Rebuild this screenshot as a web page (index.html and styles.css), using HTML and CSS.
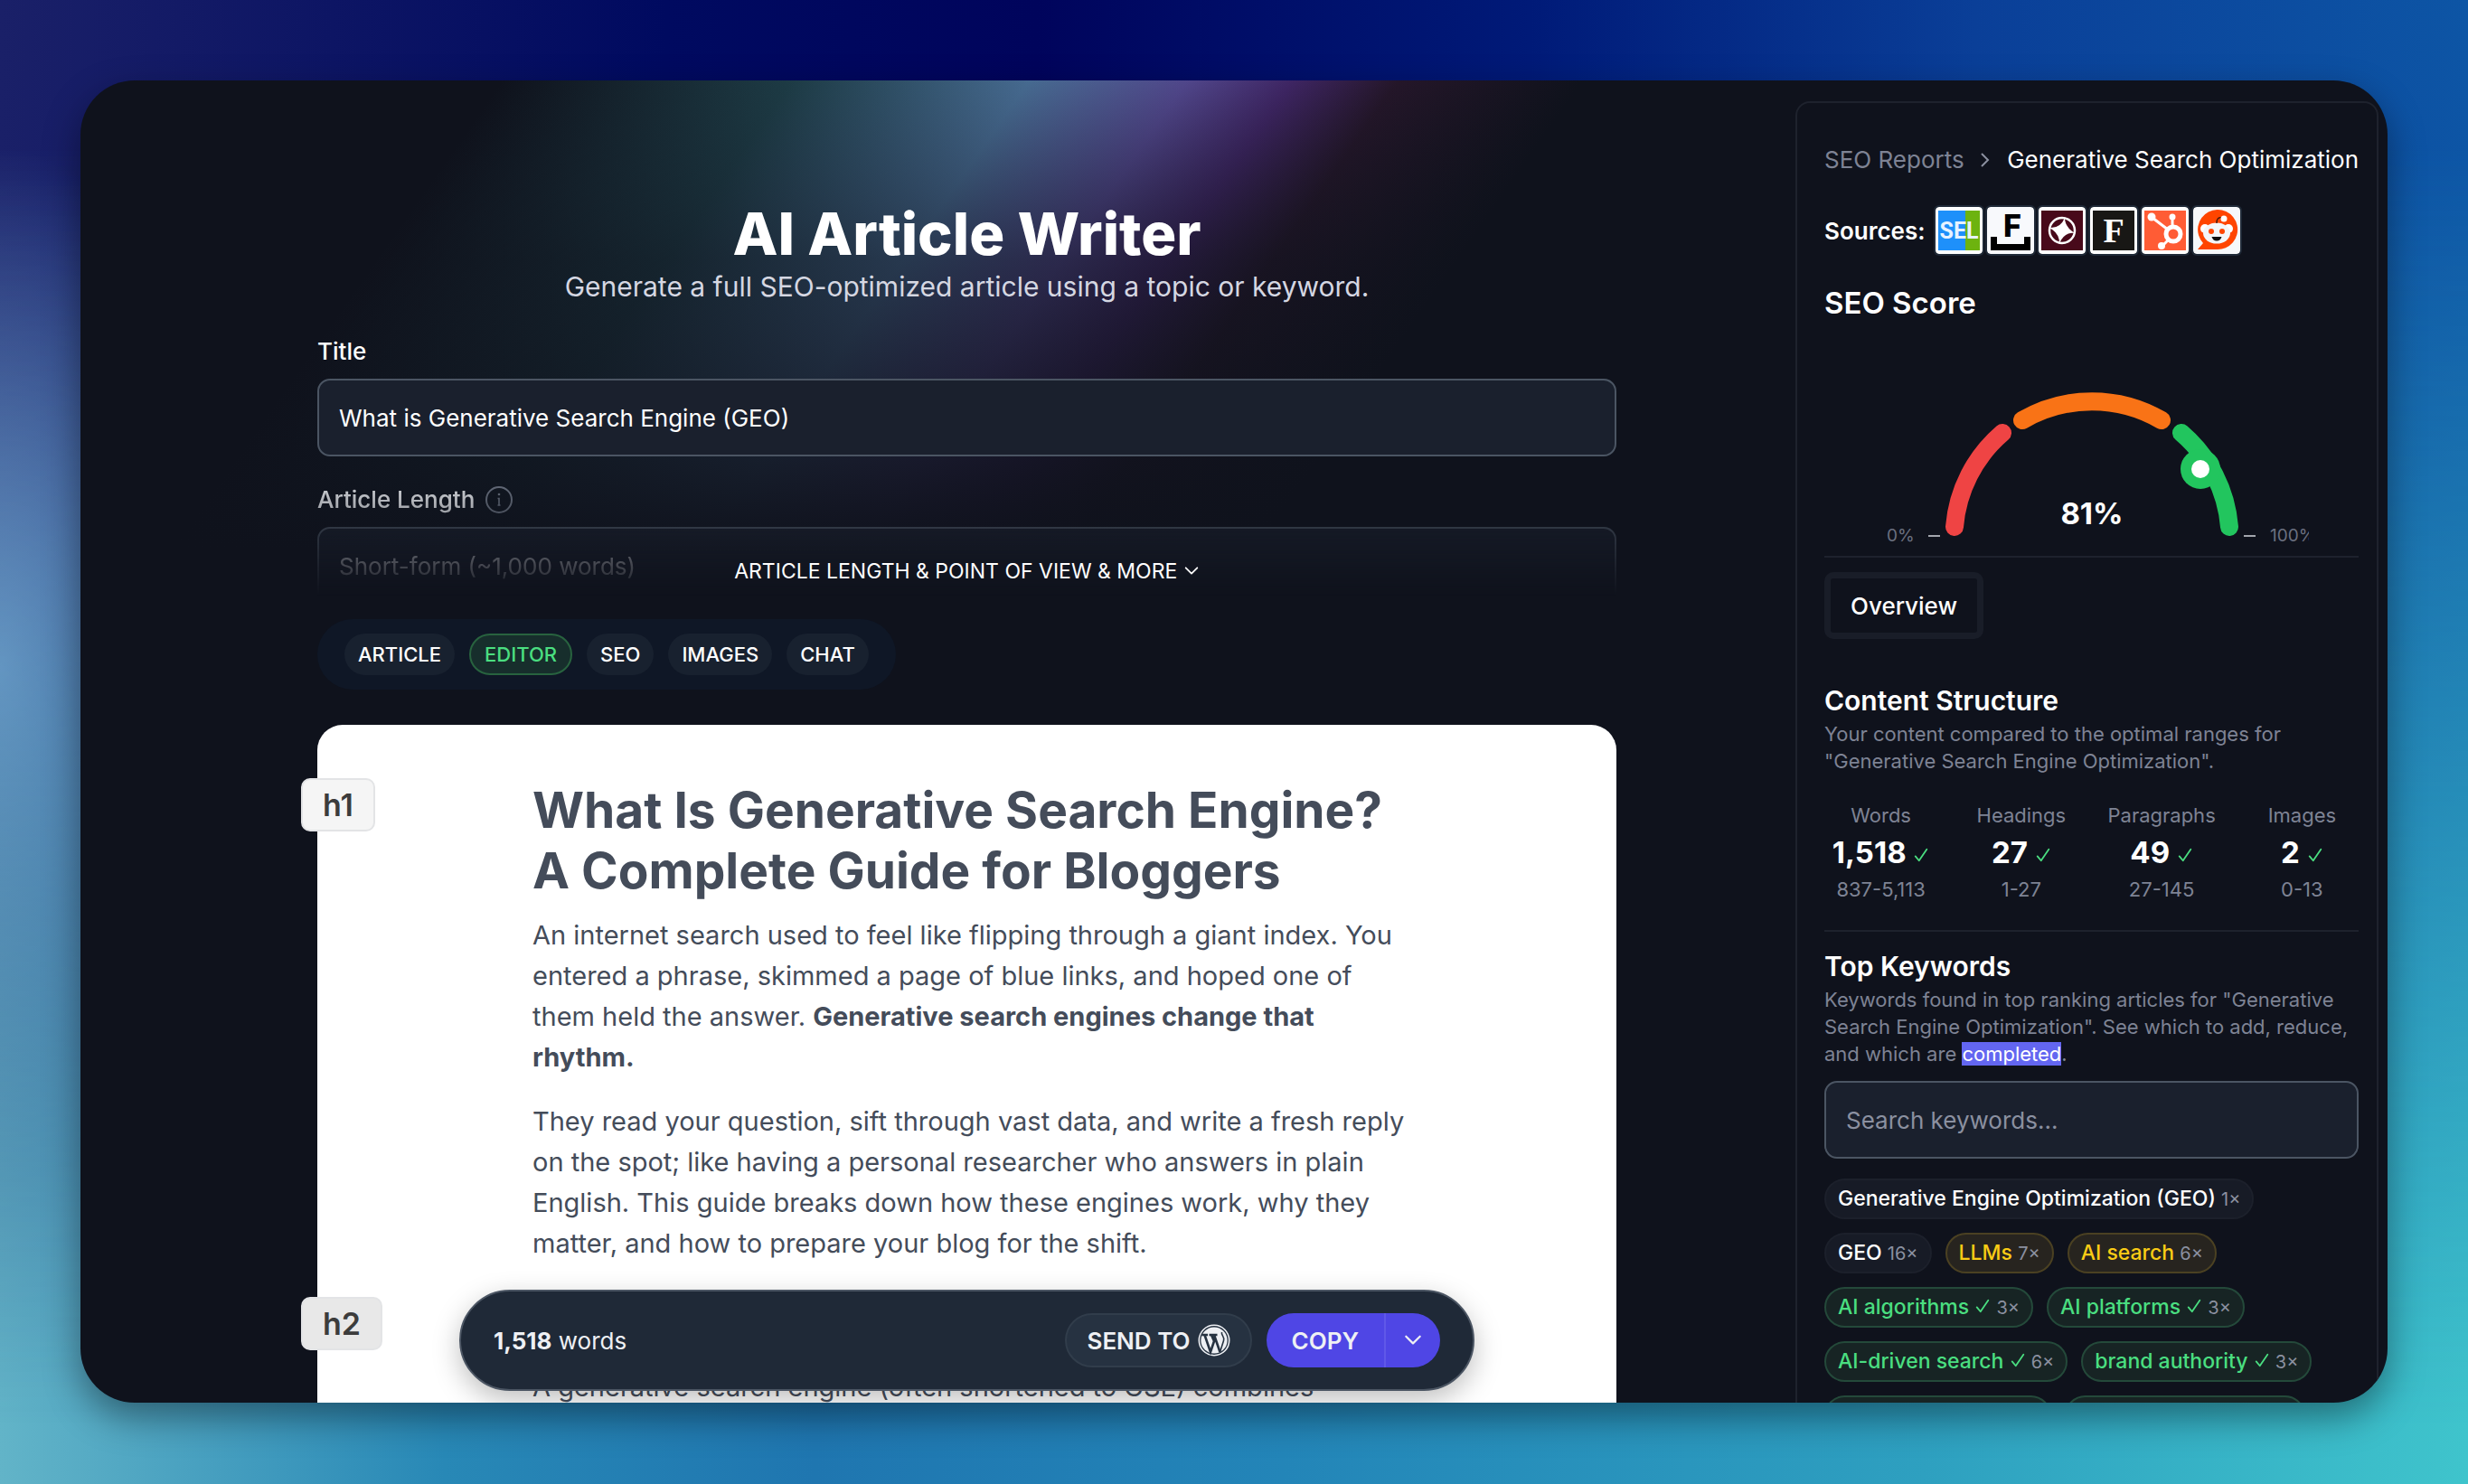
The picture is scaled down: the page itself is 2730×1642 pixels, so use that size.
FILE: index.html
```html
<!DOCTYPE html>
<html lang="en">
<head>
    <meta charset="UTF-8">
    <meta name="viewport" content="width=device-width, initial-scale=1.0">
    <title>AI Article Writer</title>
    <link rel="stylesheet" href="styles.css">
</head>
<body>
    <svg class="sprite" aria-hidden="true">
        <symbol id="check" viewBox="0 0 20 20"><path d="M3 11.5 7.5 17 17 3" fill="none" stroke="currentColor" stroke-width="2" stroke-linecap="round" stroke-linejoin="round"/></symbol>
        <symbol id="chevron" viewBox="0 0 20 20"><path d="M3 7l7 7 7-7" fill="none" stroke="currentColor" stroke-width="2" stroke-linecap="round" stroke-linejoin="round"/></symbol>
    </svg>

    <div class="window">
        <main class="writer">
            <header class="intro">
                <h1>AI Article Writer</h1>
                <p>Generate a full SEO-optimized article using a topic or keyword.</p>
            </header>

            <label class="label" for="title">Title</label>
            <input class="field" type="text" id="title" value="What is Generative Search Engine (GEO)">

            <div class="more">
                <div class="more-fields">
                    <label class="label" for="length">Article Length
                        <svg class="info" viewBox="0 0 30 30"><circle cx="15" cy="15" r="14" fill="none" stroke="currentColor" stroke-width="2"/><circle cx="15" cy="9" r="1.3" fill="currentColor"/><path d="M13.5 13.5H15V21M13.5 21h3" fill="none" stroke="currentColor" stroke-width="1.6"/></svg>
                    </label>
                    <select class="field" id="length">
                        <option>Short-form (~1,000 words)</option>
                    </select>
                </div>
                <button class="more-toggle" type="button">ARTICLE LENGTH &amp; POINT OF VIEW &amp; MORE <svg class="icon-18"><use href="#chevron"/></svg></button>
            </div>

            <nav class="tabs">
                <button type="button">ARTICLE</button>
                <button type="button" class="active">EDITOR</button>
                <button type="button">SEO</button>
                <button type="button">IMAGES</button>
                <button type="button">CHAT</button>
            </nav>

            <article class="editor">
                <span class="tag tag-h1">h1</span>
                <span class="tag tag-h2">h2</span>
                <h2>What Is Generative Search Engine? A Complete Guide for Bloggers</h2>
                <p>An internet search used to feel like flipping through a giant index. You entered a phrase, skimmed a page of blue links, and hoped one of them held the answer. <strong>Generative search engines change that rhythm.</strong></p>
                <p>They read your question, sift through vast data, and write a fresh reply on the spot; like having a personal researcher who answers in plain English. This guide breaks down how these engines work, why they matter, and how to prepare your blog for the shift.</p>
                <p class="next">A generative search engine (often shortened to GSE) combines</p>
            </article>

            <div class="bar">
                <p><b>1,518</b> words</p>
                <button type="button" class="send">SEND TO
                    <svg class="wp" viewBox="0 0 36 36"><circle cx="18" cy="18" r="16.7" fill="none" stroke="#eef0f4" stroke-width="1.6"/><circle cx="18" cy="18" r="14.6" fill="#eef0f4"/><path d="M4.5 12h6.5M12.5 12h9M7.5 12l6.5 19 4-12-3-7M18 12l6.5 19" fill="none" stroke="#263241" stroke-width="2.6"/><path d="M24.5 31l4-12.500c1.500-5-3-6-2-9.500" fill="none" stroke="#263241" stroke-width="1.6"/></svg>
                </button>
                <div class="copy">
                    <button type="button">COPY</button>
                    <button type="button" class="copy-more" aria-label="More copy options"><svg class="icon-22"><use href="#chevron"/></svg></button>
                </div>
            </div>
        </main>

        <aside class="report">
            <nav class="crumbs">
                <a href="#">SEO Reports</a>
                <svg viewBox="0 0 10 18"><path d="M1 2l7 7-7 7" fill="none" stroke="currentColor" stroke-width="2"/></svg>
                <span>Generative Search Optimization</span>
            </nav>

            <div class="sources">
                <b>Sources:</b>
                <svg viewBox="0 0 52 52"><rect width="52" height="52" rx="4" fill="#fff"/><path d="M3 4h30v44H3z" fill="#1e90fa"/><path d="M33 4h16v44H33z" fill="#6db30f"/><text x="26" y="35" class="sel">SEL</text></svg>
                <svg viewBox="0 0 52 52"><rect width="52" height="52" rx="4" fill="#f8f9fc"/><text x="28" y="33" class="block">F</text><path d="M4 33h7v8h30v-8h7v15H4z" fill="#000"/></svg>
                <svg viewBox="0 0 52 52"><rect width="52" height="52" rx="4" fill="#fff"/><path d="M3 4h46v44H3z" fill="#48091a"/><circle cx="26" cy="26" r="14" fill="none" stroke="#fff" stroke-width="2.500"/><path d="M29 12q0 10 11 17-11-2-17 11 0-11-11-17 12 1 17-11z" fill="#fff"/></svg>
                <svg viewBox="0 0 52 52"><rect width="52" height="52" rx="4" fill="#fff"/><path d="M3 4h46v44H3z" fill="#181715"/><text x="26" y="39" class="forbes">F</text></svg>
                <svg viewBox="0 0 52 52"><rect width="52" height="52" rx="4" fill="#fff"/><path d="M3 4h46v44H3z" fill="#ff5c35"/><circle cx="35" cy="30" r="8" fill="none" stroke="#fff" stroke-width="5"/><path d="M34 22V11M29 25L12 12M30 36l-8 8" stroke="#fff" stroke-width="3"/><circle cx="34" cy="11" r="3.500" fill="#fff"/><circle cx="11" cy="11" r="4.500" fill="#fff"/><circle cx="22" cy="43" r="4" fill="#fff"/></svg>
                <svg viewBox="0 0 52 52"><rect width="52" height="52" rx="4" fill="#f6f8fb"/><path d="M5 47l6-7A22 22 0 1 1 26 47z" fill="#ff4500"/><circle cx="13" cy="24" r="5" fill="#fff"/><circle cx="39" cy="24" r="5" fill="#fff"/><ellipse cx="26" cy="29" rx="15" ry="11.500" fill="#f3f6f9"/><path d="M26 18c0-5 2-7 6-6" fill="none" stroke="#4a1a0d" stroke-width="1.500"/><circle cx="34" cy="13" r="3.500" fill="#fff"/><circle cx="20" cy="27" r="3" fill="#ff4500"/><circle cx="32" cy="27" r="3" fill="#ff4500"/><path d="M20.500 33h11q-1.500 4.500-5.500 4.500T20.500 33z" fill="#111"/></svg>
            </div>

            <h3 class="score-title">SEO Score</h3>
            <svg class="gauge" viewBox="0 0 480 230">
                <g fill="none" stroke-width="20" stroke-linecap="round">
                    <path d="M88 198A153 153 0 0 1 141 94" stroke="#ef4444"/>
                    <path d="M163 80A153 153 0 0 1 317 80" stroke="#f97316"/>
                    <path d="M339 94A153 153 0 0 1 392 198" stroke="#22c55e"/>
                </g>
                <circle cx="360" cy="134" r="22" fill="#22c55e"/>
                <circle cx="360" cy="134" r="10" fill="#fff"/>
                <path d="M59 208h13M408 208h13" stroke="#a3a6ad" stroke-width="2"/>
                <text x="240" y="195" class="score">81%</text>
                <text x="13" y="214" class="tick">0%</text>
                <text x="437" y="214" class="tick">100%</text>
            </svg>

            <hr>
            <button type="button" class="overview">Overview</button>

            <h3>Content Structure</h3>
            <p class="hint">Your content compared to the optimal ranges for "Generative Search Engine Optimization".</p>
            <dl class="stats">
                <div><dt>Words</dt><dd class="value">1,518 <svg class="icon-18"><use href="#check"/></svg></dd><dd>837-5,113</dd></div>
                <div><dt>Headings</dt><dd class="value">27 <svg class="icon-18"><use href="#check"/></svg></dd><dd>1-27</dd></div>
                <div><dt>Paragraphs</dt><dd class="value">49 <svg class="icon-18"><use href="#check"/></svg></dd><dd>27-145</dd></div>
                <div><dt>Images</dt><dd class="value">2 <svg class="icon-18"><use href="#check"/></svg></dd><dd>0-13</dd></div>
            </dl>

            <hr>
            <h3>Top Keywords</h3>
            <p class="hint">Keywords found in top ranking articles for "Generative Search Engine Optimization". See which to add, reduce, and which are <mark>completed</mark>.</p>
            <input class="field" type="text" aria-label="Search keywords" placeholder="Search keywords...">

            <ul class="chips">
                <li>Generative Engine Optimization (GEO) <small>1×</small></li>
                <li>GEO <small>16×</small></li>
                <li class="low">LLMs <small>7×</small></li>
                <li class="low">AI search <small>6×</small></li>
                <li class="done">AI algorithms <svg class="icon-18"><use href="#check"/></svg> <small>3×</small></li>
                <li class="done">AI platforms <svg class="icon-18"><use href="#check"/></svg> <small>3×</small></li>
                <li class="done">AI-driven search <svg class="icon-18"><use href="#check"/></svg> <small>6×</small></li>
                <li class="done">brand authority <svg class="icon-18"><use href="#check"/></svg> <small>3×</small></li>
                <li class="done">content quality <svg class="icon-18"><use href="#check"/></svg> <small>4×</small></li>
                <li class="done">content strategy <svg class="icon-18"><use href="#check"/></svg> <small>3×</small></li>
            </ul>
        </aside>
    </div>
</body>
</html>
```
FILE: styles.css
```css
* {
    box-sizing: border-box;
    margin: 0;
    padding: 0;
}
body {
    position: relative;
    height: 100vh;
    padding: 89px 89px 90px;
    font-family: Inter, "Liberation Sans", sans-serif;
    font-size: 26px;
    color: #fff;
    background: linear-gradient(90deg, #62b4c8 0%, #2888b6 18%, #1f76b0 33%, #2385b8 52%, #2ea0c0 78%, #3fc4cc 100%);
}
/* dark half of the backdrop, fades out towards the bottom */
body::before {
    content: "";
    position: absolute;
    inset: 0;
    background:
        radial-gradient(ellipse 10% 35% at 0% 45%, #6480bc, transparent),
        linear-gradient(90deg, #1a2068 0%, #000a60 27%, #00045c 42%, #001a78 62%, #0a3f98 80%, #0d55a5 100%);
    mask-image: linear-gradient(#000 10%, transparent 96%);
}
button, input, select {
    font: inherit;
    color: inherit;
}
button {
    border: 0;
    background: none;
}
.sprite {
    position: absolute;
    width: 0;
    height: 0;
}
.icon-18 {
    width: 18px;
    height: 18px;
}
.icon-22 {
    width: 22px;
    height: 22px;
}
.window {
    position: relative;
    display: flex;
    gap: 198px;
    height: 100%;
    padding: 0 10px 0 262px;
    overflow: hidden;
    border-radius: 60px;
    background:
        linear-gradient(#0f121c00, #0f121c90 38%, #0f121c) 0 0 / 100% 520px no-repeat,
        linear-gradient(125deg, #0f121c 16%, #1d3b45 27%, #466a90 36%, #50468a 42%, #3e2563 46%, #241629 50%, #0f121c 57%) 0 0 / 100% 520px no-repeat,
        #0f121c;
    box-shadow: 0 16px 40px rgba(0, 0, 0, 0.4);
}

/* writer column */
.writer {
    position: relative;
    flex: 1;
    padding-top: 130px;
}
.intro {
    margin-bottom: 36px;
    text-align: center;
}
.intro h1 {
    font-size: 65px;
    font-weight: 800;
    line-height: 80px;
}
.intro p {
    font-size: 30px;
    line-height: 36px;
    color: #d5d7e2;
}
.label {
    display: flex;
    align-items: center;
    gap: 12px;
    margin-bottom: 12px;
    line-height: 36px;
    font-weight: 500;
}
.field {
    display: block;
    width: 100%;
    height: 86px;
    padding: 0 22px;
    border: 2px solid #4b5563;
    border-radius: 14px;
    background: #1a202d;
    appearance: none;
}
.field::placeholder {
    color: #8b90a0;
}
.more {
    position: relative;
    height: 144px;
    margin-top: 30px;
    overflow: hidden;
}
.more-fields {
    color: #e5e7eb;
    mask-image: linear-gradient(rgba(0, 0, 0, 0.9), transparent 124px);
}
.info {
    width: 30px;
    height: 30px;
    color: #6b7280;
}
.more-toggle {
    position: absolute;
    left: 0;
    right: 0;
    top: 80px;
    font-size: 23px;
    line-height: 34px;
}
.tabs {
    display: inline-flex;
    gap: 16px;
    margin: 6px 0 39px;
    padding: 16px 30px;
    border-radius: 40px;
    background: #0f1726;
}
.tabs button {
    height: 46px;
    padding: 0 15px;
    border-radius: 23px;
    background: #18212f;
    font-size: 22px;
    font-weight: 500;
}
.tabs .active {
    border: 2px solid #28633f;
    background: #172e2c;
    color: #4ade80;
}

/* document */
.editor {
    position: relative;
    height: 900px;
    padding: 61px 226px 0 238px;
    border-radius: 28px;
    background: #fff;
    color: #444c5a;
    font-size: 29px;
    line-height: 45px;
}
.editor h2 {
    margin-bottom: 15px;
    font-size: 55px;
    line-height: 67px;
}
.editor p {
    margin-bottom: 26px;
}
.editor .next {
    padding-top: 88px;
}
.tag {
    position: absolute;
    left: -18px;
    padding: 0 22px;
    border: 2px solid #e3e4e6;
    border-radius: 10px;
    background: #f5f5f5;
    color: #3c3c3c;
    font-size: 34px;
    font-weight: 600;
    line-height: 55px;
}
.tag-h1 {
    top: 59px;
}
.tag-h2 {
    top: 633px;
    background: #e8e8e8;
}
.bar {
    position: absolute;
    left: 157px;
    right: 157px;
    bottom: 13px;
    display: flex;
    align-items: center;
    gap: 16px;
    height: 112px;
    padding: 0 36px;
    border: 2px solid #4b5563;
    border-radius: 56px;
    background: #1f2937;
    box-shadow: 0 10px 30px rgba(0, 0, 0, 0.25);
    color: #eef0f4;
}
.bar p {
    flex: 1;
}
.bar button {
    font-weight: 600;
}
.send {
    display: flex;
    align-items: center;
    gap: 8px;
    height: 60px;
    padding: 0 22px;
    border: 2px solid #313d4b;
    border-radius: 30px;
    background: #263241;
}
.wp {
    width: 36px;
    height: 36px;
}
.copy {
    display: flex;
    height: 60px;
    overflow: hidden;
    border-radius: 30px;
    background: #4f46e5;
}
.copy button {
    padding: 0 28px;
}
.copy .copy-more {
    padding: 0 19px;
    border-left: 2px solid #6058e8;
}

/* report panel */
.report {
    width: 645px;
    height: 1600px;
    margin-top: 23px;
    padding: 43px 20px 0 30px;
    border: 2px solid #1e222d;
    border-radius: 16px;
}
.crumbs {
    display: flex;
    align-items: center;
    justify-content: space-between;
    line-height: 40px;
    white-space: nowrap;
}
.crumbs a {
    color: #7e8394;
    text-decoration: none;
}
.crumbs svg {
    width: 10px;
    height: 18px;
    color: #8b90a0;
}
.sources {
    display: flex;
    align-items: center;
    gap: 5px;
    margin: 32px 0 34px;
}
.sources b {
    margin-right: 6px;
    font-weight: 600;
}
.sources svg {
    width: 52px;
    height: 52px;
    border-radius: 4px;
    box-shadow: 0 0 0 2px #1f2937;
}
.sel {
    font: 700 25px Roboto, sans-serif;
    fill: #e6f2ff;
    text-anchor: middle;
}
.block {
    font: 800 34px Inter, sans-serif;
    text-anchor: middle;
}
.forbes {
    font: 700 38px "Liberation Serif", serif;
    fill: #fff;
    text-anchor: middle;
}
.report h3 {
    font-size: 30px;
    font-weight: 600;
    line-height: 40px;
}
.report .score-title {
    font-size: 33px;
}
.gauge {
    display: block;
    width: 480px;
    height: 230px;
    margin: 30px auto 0;
    overflow: hidden;
}
.score {
    font-size: 33px;
    font-weight: 700;
    fill: #fff;
    text-anchor: middle;
}
.tick {
    font-size: 19px;
    fill: #6b7080;
}
hr {
    border: 0;
    border-top: 2px solid #1e222d;
}
.overview {
    height: 74px;
    margin: 16px 0 48px;
    padding: 0 22px;
    border: 7px solid #191d28;
    border-radius: 10px;
    font-weight: 500;
}
.hint {
    padding-top: 2px;
    font-size: 22px;
    line-height: 30px;
    color: #7e8394;
}
.stats {
    display: grid;
    grid-template-columns: repeat(4, 1fr);
    gap: 30px;
    margin: 30px 0;
    text-align: center;
    font-size: 22px;
    line-height: 30px;
    color: #7e8394;
}
.stats .value {
    margin: 6px 0;
    font-size: 33px;
    font-weight: 700;
    line-height: 40px;
    color: #fff;
    white-space: nowrap;
}
.stats svg {
    color: #4ade80;
}
hr + h3 {
    margin-top: 18px;
}
mark {
    background: #6366f1;
    color: #fff;
}
.hint + .field {
    margin: 15px 0 22px;
}
.chips {
    display: flex;
    flex-wrap: wrap;
    gap: 15px;
    list-style: none;
}
.chips li {
    height: 45px;
    padding: 0 13px;
    border: 2px solid #1c202b;
    border-radius: 23px;
    background: #171b26;
    font-size: 23px;
    font-weight: 500;
    line-height: 41px;
}
.chips small {
    font-size: 20px;
    font-weight: 400;
    color: #8b90a0;
}
.chips .low {
    border-color: #4b4122;
    background: #27241f;
    color: #facc15;
}
.chips .done {
    border-color: #24493a;
    background: #172424;
    color: #4ade80;
}
```
